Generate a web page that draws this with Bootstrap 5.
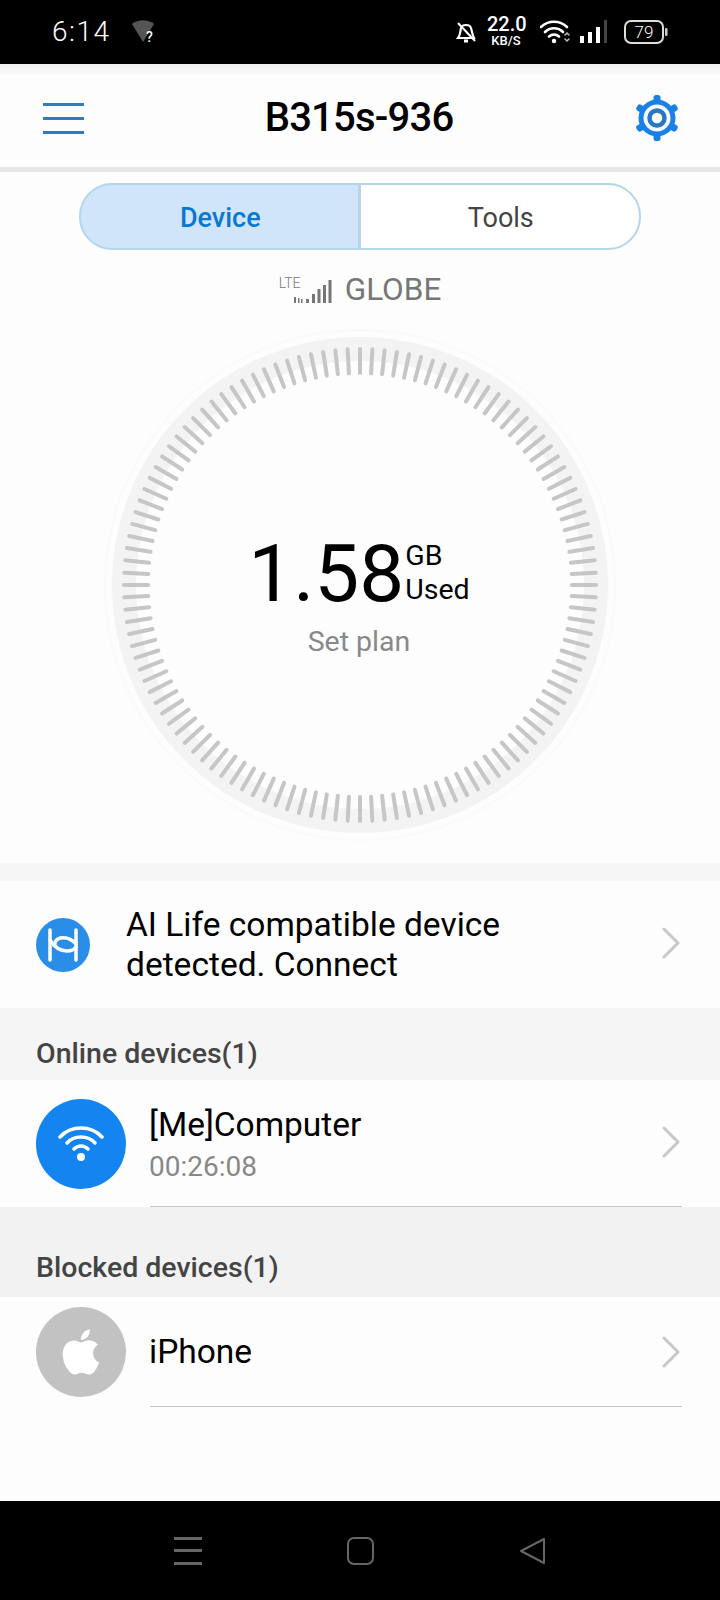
<!DOCTYPE html>
<html lang="en">
<head>
  <meta charset="UTF-8" />
  <meta name="viewport" content="width=device-width, initial-scale=1">
  <title>B315s-936</title>
  <link href="https://cdn.jsdelivr.net/npm/bootstrap@5.3.0/dist/css/bootstrap.min.css" rel="stylesheet" />
  <style>
    body { width: 720px; min-height: 1600px; background: #fdfdfd; font-family: Roboto, "Liberation Sans", sans-serif; color: #000; }
    .screen { min-height: 1600px; }

    .status-bar { height: 64px; background: #000; color: #fff; padding: 0 52px 0 52px; }
    .status-time { font-size: 28px; font-weight: 300; letter-spacing: 1.5px; line-height: 1; margin-right: 21px; }
    .speed { width: 38px; margin: 0 14px 0 10px; padding-bottom: 3px; text-align: center; font-weight: 500; }
    .speed-num { font-size: 20px; line-height: 20px; }
    .speed-unit { font-size: 13px; line-height: 13px; }

    .top-bar { height: 108px; padding: 5px 40px 0 43px; border-bottom: 5px solid #e6e6e6; background: linear-gradient(#efefef 0, #fdfdfd 12px); }
    .top-title { font-size: 40px; font-weight: 500; letter-spacing: -0.8px; line-height: 1; margin: 0; }

    .tab-wrap { padding-top: 11px; }
    .tabs { width: 563px; height: 67px; }
    .tabs .btn { flex: 0 0 50%; font-size: 27px; line-height: 1; padding-top: 10px; border: 2px solid #b5d5ec; --bs-btn-border-radius: 33px; }
    .tab-on { background: #d0e5fa; color: #0a78d0; font-weight: 500; }
    .tab-on:hover { background: #d0e5fa; color: #0a78d0; }
    .tabs .tab-off { background: #fff; color: #444; padding-right: 10px; }
    .tabs .tab-on { padding-right: 10px; }

    .carrier { height: 75px; padding-top: 5px; color: #777; font-size: 31.5px; gap: 13px; }
    .lte { position: relative; width: 53px; height: 27px; }
    .lte span { position: absolute; left: 0; top: -1px; font-size: 14px; line-height: 1; color: #777; font-weight: 300; }
    .lte svg { position: absolute; right: 0; bottom: 0; }

    .gauge { width: 520px; height: 520px; margin: 0 auto; }
    .gauge-mid { position: absolute; inset: 0; padding-top: 209px; padding-right: 2px; }
    .usage-num { font-size: 80px; line-height: 1; font-weight: 400; }
    .usage-unit { font-size: 28.5px; line-height: 34px; margin-left: 1px; padding-top: 5px; }
    .set-plan { font-size: 28.5px; color: #888; line-height: 1; margin-top: 14px; }

    .sep { height: 18px; background: #f6f6f6; margin-top: 18px; }
    .rows .list-group-item { background: #fdfdfd; border: 0; padding: 0; color: #000; }
    .rows .row-ai { height: 127px; padding-left: 36px; }
    .ai-text { margin-left: 36px; font-size: 33.5px; line-height: 40px; }
    .chev { margin-left: auto; margin-right: 40px; flex: none; }
    .chev-up { margin-bottom: 4px; }
    .rows .group-title { background: #f5f5f5; font-size: 28.5px; font-weight: 500; color: #444; padding-left: 36px; line-height: 1; }
    .rows .group-online { height: 72px; padding-top: 32px; }
    .rows .group-blocked { height: 90px; padding-top: 47px; background: #f2f2f2; }
    .rows .dev-row { padding-left: 36px; }
    .dev-online { height: 127px; }
    .dev-blocked { height: 110px; }
    .dev-icon { width: 90px; height: 90px; border-radius: 50%; flex: none; }
    .ic-blue { background: #1384f0; }
    .ic-gray { background: #c2c2c2; }
    .dev-body { margin-left: 23px; margin-right: 38px; }
    .dev-name { font-size: 33.5px; line-height: 40px; }
    .dev-time { font-size: 28px; line-height: 32px; color: #888; margin-top: 6px; }
    .dev-line { position: absolute; left: 150px; right: 38px; bottom: 0; height: 1px; background: #c9c9c9; }

    .nav-bar { height: 99px; background: #000; gap: 145px; }
  </style>
</head>
<body>
<div class="screen d-flex flex-column">

  <!-- status bar -->
  <div class="status-bar d-flex align-items-center">
    <span class="status-time">6:14</span>
    <svg width="28" height="26" viewBox="0 0 28 26">
      <path d="M1 5 C7 0 17 0 23 5 L12 23 Z" fill="#555"/>
      <text x="15" y="23" font-size="14" font-weight="500" fill="#fff" font-family="Roboto">?</text>
    </svg>
    <div class="ms-auto d-flex align-items-center">
      <svg width="22" height="24" viewBox="0 0 22 24" fill="none" stroke="#fff" stroke-width="2.2">
        <path d="M3 18 C6 14 5 11 6 8 C7 4 15 4 16 8 C17 11 17 14 19 18 Z"/>
        <path d="M9 21 h4" stroke-width="3"/>
        <path d="M3 3 L20 21" stroke-width="2"/>
      </svg>
      <div class="speed">
        <div class="speed-num">22.0</div>
        <div class="speed-unit">KB/S</div>
      </div>
      <svg width="31" height="24" viewBox="0 0 31 24" fill="none" stroke="#fff" stroke-width="2.6" stroke-linecap="round">
        <path d="M2 7 C9 0 21 0 28 7"/>
        <path d="M6 12 C11 7 19 7 24 12"/>
        <path d="M10 16.500 C13 14 17 14 20 16.500"/>
        <circle cx="15" cy="21" r="2.200" fill="#fff" stroke="none"/>
        <path d="M26 15 l2 -2 l2 2 M26 19 l2 2 l2 -2" stroke-width="1.500" stroke="#bbb"/>
      </svg>
      <svg class="ms-2" width="30" height="24" viewBox="0 0 30 24" fill="#fff">
        <rect x="2" y="16" width="4" height="7"/>
        <rect x="10" y="12" width="4" height="11"/>
        <rect x="18" y="7" width="4" height="16"/>
        <rect x="26" y="0" width="3" height="23" fill="#444"/>
      </svg>
      <svg class="ms-3" width="44" height="24" viewBox="0 0 44 24">
        <rect x="1" y="1" width="38" height="22" rx="6" fill="none" stroke="#ddd" stroke-width="2"/>
        <rect x="41" y="8" width="2.500" height="8" rx="1" fill="#ccc"/>
        <text x="20" y="18" font-size="17" font-weight="300" text-anchor="middle" fill="#fff" font-family="Roboto">79</text>
      </svg>
    </div>
  </div>

  <!-- header -->
  <div class="top-bar d-flex align-items-center justify-content-between">
    <svg width="41" height="31" viewBox="0 0 41 31" fill="#2b7cc4">
      <rect y="0" width="41" height="3"/>
      <rect y="14" width="41" height="3"/>
      <rect y="28" width="41" height="3"/>
    </svg>
    <h1 class="top-title">B315s-936</h1>
    <svg width="46" height="46" viewBox="-23 -23 46 46">
      <g fill="#1a80e6">
        <circle r="18.500"/>
        <rect x="-3.500" y="-23" width="7" height="8" rx="2.500"/>
        <rect x="-3.500" y="-23" width="7" height="8" rx="2.500" transform="rotate(60)"/>
        <rect x="-3.500" y="-23" width="7" height="8" rx="2.500" transform="rotate(120)"/>
        <rect x="-3.500" y="-23" width="7" height="8" rx="2.500" transform="rotate(180)"/>
        <rect x="-3.500" y="-23" width="7" height="8" rx="2.500" transform="rotate(240)"/>
        <rect x="-3.500" y="-23" width="7" height="8" rx="2.500" transform="rotate(300)"/>
      </g>
      <circle r="13.500" fill="#f4f9fe"/>
      <circle r="7.500" fill="#fff" stroke="#2a78c0" stroke-width="4.500"/>
    </svg>
  </div>

  <!-- tabs -->
  <div class="tab-wrap d-flex justify-content-center">
    <div class="btn-group tabs" role="group">
      <button type="button" class="btn tab-on">Device</button>
      <button type="button" class="btn tab-off">Tools</button>
    </div>
  </div>

  <!-- carrier -->
  <div class="carrier d-flex align-items-center justify-content-center">
    <div class="lte">
      <span>LTE</span>
      <svg width="38" height="24" viewBox="0 0 38 24" fill="#777">
        <rect x="0" y="17" width="2" height="6"/>
        <rect x="4" y="18" width="1.500" height="5"/>
        <rect x="7" y="19" width="1.500" height="4"/>
        <rect x="12" y="19" width="3" height="4"/>
        <rect x="18" y="14" width="3" height="9"/>
        <rect x="23.500" y="9" width="3" height="14"/>
        <rect x="29" y="5" width="3" height="18"/>
        <rect x="34.500" y="0" width="3" height="23"/>
      </svg>
    </div>
    <span>GLOBE</span>
  </div>

  <!-- gauge -->
  <div class="gauge position-relative">
    <svg width="520" height="520" viewBox="-260 -260 520 520">
      <circle r="255" fill="none" stroke="#fafafa" stroke-width="2"/>
      <circle r="248" fill="#f3f3f3"/>
      <circle r="224" fill="#fdfdfd"/>
      <g id="ticks" stroke="#c6c6c6" stroke-width="4" stroke-linecap="round"></g>
    </svg>
    <div class="gauge-mid text-center">
      <div class="d-flex justify-content-center">
        <div class="usage-num">1.58</div>
        <div class="usage-unit text-start">GB<br>Used</div>
      </div>
      <div class="set-plan">Set plan</div>
    </div>
  </div>

  <div class="sep"></div>

  <!-- lists -->
  <div class="list-group list-group-flush rows">
    <div class="list-group-item row-ai d-flex align-items-center">
      <svg width="54" height="54" viewBox="-27 -27 54 54" fill="none">
        <circle r="27" fill="#2a8ee8"/>
        <g stroke="#fff" stroke-width="3.500" stroke-linecap="round">
          <path d="M-13 -15 V15"/>
          <path d="M13 -15 V15"/>
          <path d="M-13 -5 C-8 3 -2 6 4 6 C8 6 11 5 13 2"/>
          <path d="M13 -1 C8 -7 2 -8 -3 -7 C-7 -6 -9 -2 -8 1"/>
        </g>
      </svg>
      <div class="ai-text">AI Life compatible device<br>detected. Connect</div>
      <svg class="chev chev-up" width="18" height="32" viewBox="0 0 18 32" fill="none" stroke="#c8c8c8" stroke-width="3" stroke-linecap="round" stroke-linejoin="round"><path d="M2 2 L16 16 L2 30"/></svg>
    </div>
    <div class="list-group-item group-title group-online">Online devices(1)</div>
    <div class="list-group-item dev-row dev-online d-flex align-items-center position-relative">
      <div class="dev-icon ic-blue d-flex align-items-center justify-content-center">
        <svg width="46" height="36" viewBox="0 0 46 36" fill="none" stroke="#fff" stroke-width="3.500" stroke-linecap="round">
          <path d="M2 11 C13 -1 33 -1 44 11"/>
          <path d="M9 17 C16 9 30 9 37 17"/>
          <path d="M16 23 C20 19 26 19 30 23"/>
          <circle cx="23" cy="31" r="4" fill="#fff" stroke="none"/>
        </svg>
      </div>
      <div class="dev-body">
        <div class="dev-name">[Me]Computer</div>
        <div class="dev-time">00:26:08</div>
      </div>
      <svg class="chev chev-up" width="18" height="32" viewBox="0 0 18 32" fill="none" stroke="#c8c8c8" stroke-width="3" stroke-linecap="round" stroke-linejoin="round"><path d="M2 2 L16 16 L2 30"/></svg>
      <div class="dev-line"></div>
    </div>
    <div class="list-group-item group-title group-blocked">Blocked devices(1)</div>
    <div class="list-group-item dev-row dev-blocked d-flex align-items-center position-relative">
      <div class="dev-icon ic-gray d-flex align-items-center justify-content-center">
        <svg width="54" height="54" viewBox="0 0 24 24" fill="#fff">
          <path d="M18.71,19.5C17.88,20.74 17,21.95 15.66,21.97C14.32,22 13.89,21.18 12.37,21.18C10.84,21.18 10.37,21.95 9.1,22C7.79,22.05 6.8,20.68 5.96,19.47C4.25,17 2.94,12.45 4.7,9.39C5.57,7.87 7.13,6.91 8.82,6.88C10.1,6.86 11.32,7.75 12.11,7.75C12.89,7.75 14.37,6.68 15.92,6.84C16.57,6.87 18.39,7.1 19.56,8.82C19.47,8.88 17.39,10.1 17.41,12.63C17.44,15.65 20.06,16.66 20.09,16.67C20.06,16.74 19.67,18.11 18.71,19.5M13,3.5C13.73,2.67 14.94,2.04 15.94,2C16.07,3.17 15.6,4.35 14.9,5.19C14.21,6.04 13.07,6.7 11.95,6.61C11.8,5.46 12.36,4.26 13,3.5Z"/>
        </svg>
      </div>
      <div class="dev-body">
        <div class="dev-name">iPhone</div>
      </div>
      <svg class="chev" width="18" height="32" viewBox="0 0 18 32" fill="none" stroke="#c8c8c8" stroke-width="3" stroke-linecap="round" stroke-linejoin="round"><path d="M2 2 L16 16 L2 30"/></svg>
      <div class="dev-line"></div>
    </div>
  </div>

  <!-- android nav -->
  <div class="nav-bar mt-auto d-flex align-items-center justify-content-center">
    <svg width="28" height="28" viewBox="0 0 28 28" fill="#666">
      <rect y="0" width="28" height="3"/>
      <rect y="12" width="28" height="3"/>
      <rect y="25" width="28" height="3"/>
    </svg>
    <svg width="27" height="28" viewBox="0 0 27 28" fill="none" stroke="#666" stroke-width="2">
      <rect x="1" y="1" width="25" height="26" rx="6"/>
    </svg>
    <svg width="27" height="28" viewBox="0 0 27 28" fill="none" stroke="#666" stroke-width="2" stroke-linejoin="round">
      <path d="M25 2 V26 L2 14 Z"/>
    </svg>
  </div>
</div>

<script src="https://cdn.jsdelivr.net/npm/bootstrap@5.3.0/dist/js/bootstrap.bundle.min.js"></script>
<script>
  // gauge ticks, 120 around the ring
  const ticks = document.getElementById('ticks');
  for (let i = 0; i < 120; i++) {
    const a = i * Math.PI / 60;
    const line = document.createElementNS('http://www.w3.org/2000/svg', 'line');
    line.setAttribute('x1', (212 * Math.sin(a)).toFixed(2));
    line.setAttribute('y1', (-212 * Math.cos(a)).toFixed(2));
    line.setAttribute('x2', (236 * Math.sin(a)).toFixed(2));
    line.setAttribute('y2', (-236 * Math.cos(a)).toFixed(2));
    ticks.appendChild(line);
  }
</script>
</body>
</html>
